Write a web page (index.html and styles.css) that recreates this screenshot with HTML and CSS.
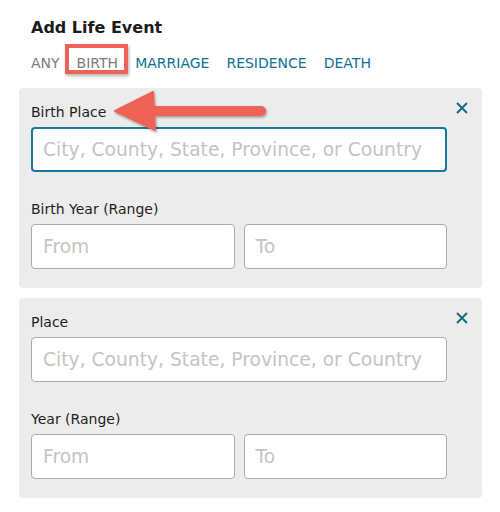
FILE: index.html
```html
<!DOCTYPE html>
<html>
<head>
<meta charset="utf-8">
<link rel="stylesheet" href="styles.css">
</head>
<body>
<div class="page">
  <h1 class="title">Add Life Event</h1>
  <nav class="tabs">
    <span class="tab muted">ANY</span>
    <span class="tab muted highlighted">BIRTH</span>
    <a class="tab">MARRIAGE</a>
    <a class="tab">RESIDENCE</a>
    <a class="tab">DEATH</a>
  </nav>

  <section class="event">
    <button class="close" aria-label="Remove">
      <svg width="12" height="12" viewBox="0 0 12 12"><path d="M1 1L11 11M11 1L1 11" stroke="currentColor" stroke-width="2" fill="none"/></svg>
    </button>
    <label class="label">Birth Place</label>
    <div class="field wide focused"><span class="ph">City, County, State, Province, or Country</span></div>
    <label class="label second">Birth Year (Range)</label>
    <div class="range">
      <div class="field"><span class="ph">From</span></div>
      <div class="field"><span class="ph">To</span></div>
    </div>
  </section>

  <section class="event">
    <button class="close" aria-label="Remove">
      <svg width="12" height="12" viewBox="0 0 12 12"><path d="M1 1L11 11M11 1L1 11" stroke="currentColor" stroke-width="2" fill="none"/></svg>
    </button>
    <label class="label">Place</label>
    <div class="field wide"><span class="ph">City, County, State, Province, or Country</span></div>
    <label class="label second">Year (Range)</label>
    <div class="range">
      <div class="field"><span class="ph">From</span></div>
      <div class="field"><span class="ph">To</span></div>
    </div>
  </section>

  <svg class="arrow" width="160" height="50" viewBox="0 0 160 50">
    <defs>
      <filter id="sh" x="-10%" y="-20%" width="130%" height="160%">
        <feDropShadow dx="1" dy="1.5" stdDeviation="1.2" flood-color="#000" flood-opacity="0.35"/>
      </filter>
    </defs>
    <g filter="url(#sh)" fill="#ef6257" stroke="#ef6257">
      <line x1="40" y1="25" x2="151" y2="25" stroke-width="10" stroke-linecap="round"/>
      <polygon points="5,25 43,6 45,44" stroke-width="2" stroke-linejoin="round"/>
    </g>
  </svg>
</div>
</body>
</html>
```

FILE: styles.css
```css
html, body {
  margin: 0;
  padding: 0;
  background: #ffffff;
}

.page {
  position: relative;
  width: 500px;
  height: 512px;
  padding: 16px 18px 0 19px;
  box-sizing: border-box;
  font-family: "DejaVu Sans", Verdana, sans-serif;
  color: #222;
}

.title {
  margin: 0 0 0 12px;
  font-size: 16px;
  font-weight: bold;
  line-height: 24px;
  color: #1b1b1b;
}

.tabs {
  display: flex;
  gap: 17px;
  margin: 11px 0 0 12px;
  height: 24px;
  align-items: center;
}

.tab {
  font-size: 14px;
  line-height: 20px;
  color: #0f6f95;
}

.tab.muted {
  color: #7b7b7b;
}

.highlighted {
  position: relative;
}

.highlighted::after {
  content: "";
  position: absolute;
  left: -12px;
  right: -10px;
  top: -9px;
  bottom: -1px;
  border: 4px solid #ef6257;
  box-shadow: 1px 2px 3px rgba(0, 0, 0, 0.3);
}

.event {
  position: relative;
  margin-top: 13px;
  background: #ececec;
  border-radius: 4px;
  padding: 14px 35px 19px 12px;
}

.event + .event {
  margin-top: 10px;
}

.close {
  position: absolute;
  right: 14px;
  top: 14px;
  border: 0;
  padding: 0;
  background: none;
  color: #16698a;
  width: 12px;
  height: 12px;
  display: block;
}

.close svg {
  display: block;
}

.label {
  display: block;
  font-size: 14px;
  line-height: 20px;
  color: #1e1e1e;
  margin-bottom: 5px;
}

.label.second {
  margin-top: 27px;
}

.field {
  height: 45px;
  box-sizing: border-box;
  border: 1px solid #ababab;
  border-radius: 4px;
  background: #fff;
  display: flex;
  align-items: center;
  padding-left: 11px;
}

.field.focused {
  border: 2px solid #1679a0;
  padding-left: 10px;
}

.ph {
  font-size: 18.7px;
  color: #c4c4c4;
  white-space: nowrap;
}

.range {
  display: grid;
  grid-template-columns: 1fr 1fr;
  gap: 9px;
}

.arrow {
  position: absolute;
  left: 110px;
  top: 86px;
  overflow: visible;
}
```
